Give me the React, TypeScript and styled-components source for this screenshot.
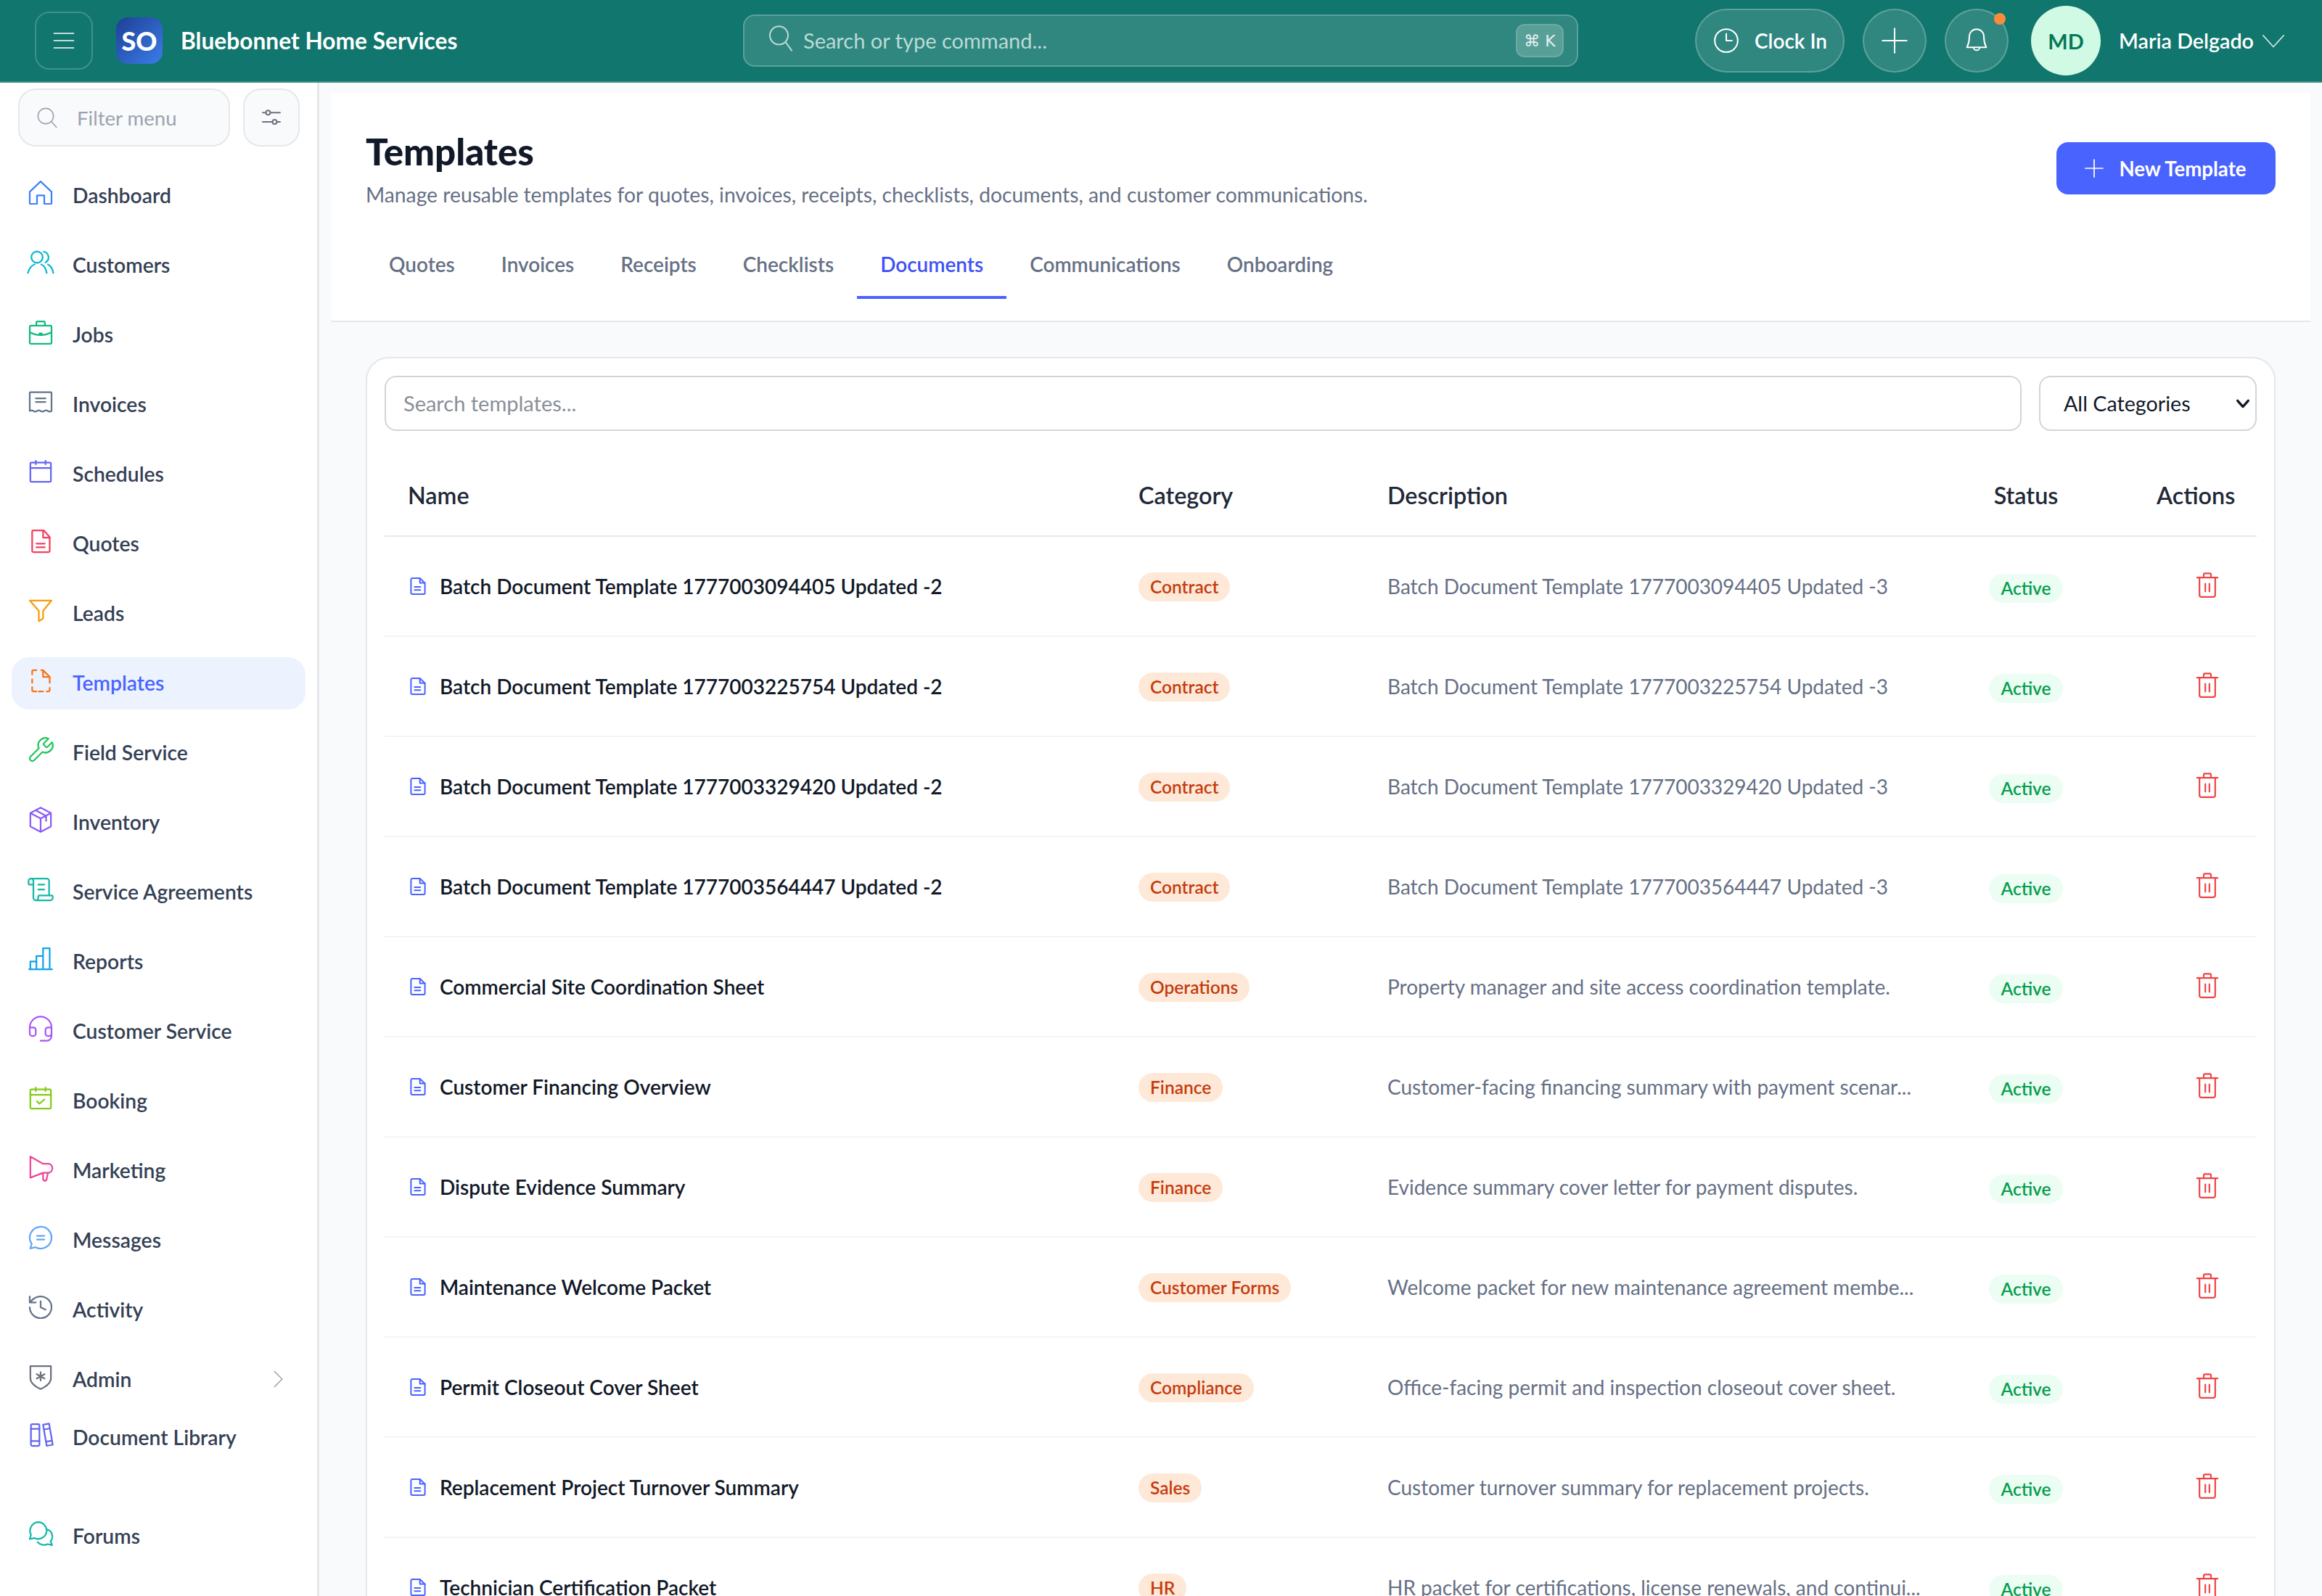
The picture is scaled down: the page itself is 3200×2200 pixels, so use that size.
import React from 'react'
import styled, { createGlobalStyle } from 'styled-components'

const GlobalStyle = createGlobalStyle`
  html, body {
    margin: 0;
    padding: 0;
    background: #f9fafb;
  }
  * {
    box-sizing: border-box;
  }
  body {
    font-family: 'Lato', 'Noto Sans', sans-serif;
  }
`

const Shell = styled.div`
  width: 3200px;
  height: 2200px;
  overflow: hidden;
  display: flex;
  flex-direction: column;
`

const TopBar = styled.header`
  height: 114px;
  flex: none;
  display: flex;
  align-items: center;
  background: #11766d;
  border-bottom: 2px solid #3f8f87;
  padding: 0 50px 0 48px;
`

const MenuButton = styled.button`
  width: 80px;
  height: 80px;
  flex: none;
  display: flex;
  align-items: center;
  justify-content: center;
  background: transparent;
  border: 2px solid rgba(255, 255, 255, 0.2);
  border-radius: 20px;
  color: rgba(255, 255, 255, 0.75);
  padding: 0;
`

const Logo = styled.div`
  width: 64px;
  height: 64px;
  flex: none;
  margin-left: 32px;
  display: flex;
  align-items: center;
  justify-content: center;
  border-radius: 16px;
  background: linear-gradient(135deg, #1e3f96, #3b7de8);
  color: #fff;
  font-size: 36px;
  font-weight: 900;
`

const Brand = styled.div`
  margin-left: 25px;
  width: 382px;
  flex: none;
  color: #fff;
  font-size: 31.7px;
  font-weight: 700;
  white-space: nowrap;
`

const CommandBar = styled.div`
  margin-left: 393px;
  width: 1151px;
  height: 72px;
  flex: none;
  display: flex;
  align-items: center;
  padding: 0 18px 6px 30px;
  background: rgba(255, 255, 255, 0.13);
  border: 2px solid rgba(255, 255, 255, 0.22);
  border-radius: 16px;
  color: #bcdad6;
  font-size: 29px;
`

const CommandLabel = styled.span`
  margin-left: 11px;
  flex: 1;
  position: relative;
  top: 2px;
`

const Kbd = styled.span`
  width: 66px;
  height: 46px;
  display: flex;
  align-items: center;
  justify-content: center;
  gap: 6px;
  position: relative;
  top: 3px;
  border-radius: 12px;
  border: 2px solid rgba(255, 255, 255, 0.12);
  background: rgba(255, 255, 255, 0.2);
  color: #e6f2f0;
  font-size: 22px;
  font-family: 'DejaVu Sans', sans-serif;
`

const TopActions = styled.div`
  margin-left: auto;
  display: flex;
  align-items: center;
`

const ClockButton = styled.button`
  width: 206px;
  height: 88px;
  display: flex;
  align-items: center;
  justify-content: center;
  gap: 20px;
  background: rgba(255, 255, 255, 0.13);
  border: 2px solid rgba(255, 255, 255, 0.22);
  border-radius: 44px;
  color: #fff;
  font-family: inherit;
  font-size: 28px;
  font-weight: 600;
  padding: 0;
`

const RoundButton = styled.button`
  position: relative;
  width: 88px;
  height: 88px;
  margin-left: 25px;
  display: flex;
  align-items: center;
  justify-content: center;
  background: rgba(255, 255, 255, 0.13);
  border: 2px solid rgba(255, 255, 255, 0.22);
  border-radius: 50%;
  color: #fff;
  padding: 0;
`

const NotifyDot = styled.span`
  position: absolute;
  top: 4px;
  right: 2px;
  width: 16px;
  height: 16px;
  border-radius: 50%;
  background: #fb8a3c;
`

const Avatar = styled.div`
  width: 96px;
  height: 96px;
  margin-left: 31px;
  display: flex;
  align-items: center;
  justify-content: center;
  border-radius: 50%;
  background: #d1fae5;
  color: #047857;
  font-size: 29px;
  font-weight: 700;
`

const UserName = styled.span`
  margin-left: 25px;
  color: #fff;
  font-size: 28.7px;
  font-weight: 600;
  white-space: nowrap;
`

const UserChevron = styled.span`
  margin-left: 10px;
  display: flex;
  color: rgba(255, 255, 255, 0.8);
`

const Body = styled.div`
  flex: 1;
  display: flex;
  min-height: 0;
`

const Sidebar = styled.aside`
  width: 440px;
  flex: none;
  background: #fff;
  border-right: 3px solid #e5e7eb;
  padding: 8px 16px 0;
  overflow: hidden;
`

const FilterRow = styled.div`
  display: flex;
  gap: 18px;
  margin: 0 8px 32px 9px;
`

const FilterBox = styled.div`
  width: 292px;
  height: 80px;
  display: flex;
  align-items: center;
  gap: 25px;
  padding-left: 22px;
  background: #f9fafb;
  border: 2px solid #e5e7eb;
  border-radius: 24px;
  color: #9ca3af;
  font-size: 27.6px;
`

const FilterButton = styled.button`
  width: 78px;
  height: 80px;
  display: flex;
  align-items: center;
  justify-content: center;
  background: #f9fafb;
  border: 2px solid #e5e7eb;
  border-radius: 24px;
  color: #6b7280;
  padding: 0;
`

const NavGroup = styled.nav<{ $top?: number }>`
  display: flex;
  flex-direction: column;
  gap: 24px;
  margin-top: ${(p) => p.$top || 0}px;
`

const NavItem = styled.a<{ $active?: boolean }>`
  height: 72px;
  flex: none;
  display: flex;
  align-items: center;
  padding: 0 20px 2px;
  border-radius: 24px;
  background: ${(p) => (p.$active ? '#ecf2fe' : 'transparent')};
  color: ${(p) => (p.$active ? '#4963ff' : '#344054')};
  font-size: 28.3px;
  font-weight: 600;
`

const NavIconSlot = styled.span`
  width: 40px;
  height: 40px;
  flex: none;
  display: flex;
  margin: 0 24px 6px 0;
`

const NavArrow = styled.span`
  margin-left: auto;
  margin-right: 4px;
  display: flex;
  color: #9ca3af;
`

const Main = styled.main`
  flex: 1;
  min-width: 0;
  padding: 14px 16px 0;
  background: #f9fafb;
`

const PageHead = styled.section`
  height: 316px;
  background: #fff;
  border-bottom: 2px solid #e5e7eb;
  padding: 0 48px;
  display: flex;
  flex-direction: column;
`

const TitleRow = styled.div`
  display: flex;
  justify-content: space-between;
  align-items: flex-start;
  padding-top: 52px;
`

const Title = styled.h1`
  margin: 0;
  color: #111827;
  font-size: 51px;
  line-height: 58px;
  font-weight: 900;
`

const Subtitle = styled.p`
  margin: 10px 0 0;
  color: #667085;
  font-size: 28.25px;
  line-height: 40px;
`

const NewButton = styled.button`
  width: 302px;
  height: 72px;
  margin-top: 16px;
  display: flex;
  align-items: center;
  justify-content: center;
  gap: 18px;
  background: #4963ff;
  border: none;
  border-radius: 16px;
  color: #fff;
  font-family: inherit;
  font-size: 27.6px;
  font-weight: 700;
  padding: 0 4px 0 0;
`

const Tabs = styled.div`
  display: flex;
  margin-top: 48px;
`

const Tab = styled.a<{ $active?: boolean }>`
  height: 76px;
  display: flex;
  align-items: center;
  padding: 0 32px 16px;
  border-bottom: 4px solid ${(p) => (p.$active ? '#4963ff' : 'transparent')};
  color: ${(p) => (p.$active ? '#3d50f5' : '#667085')};
  font-size: 27.95px;
  font-weight: 600;
`

const Content = styled.div`
  padding: 48px;
`

const Card = styled.section`
  background: #fff;
  border: 2px solid #e5e7eb;
  border-radius: 32px;
  padding: 24px;
`

const Toolbar = styled.div`
  display: flex;
  gap: 24px;
  margin-bottom: 32px;
`

const SearchBox = styled.div`
  flex: 1;
  height: 76px;
  display: flex;
  align-items: center;
  padding: 0 24px 2px;
  border: 2px solid #d1d5db;
  border-radius: 16px;
  color: #8a8f98;
  font-size: 29px;
`

const SelectWrap = styled.div`
  position: relative;
  width: 300px;
  height: 76px;
`

const CategorySelect = styled.select`
  width: 100%;
  height: 100%;
  appearance: none;
  padding: 0 32px;
  background: #fff;
  border: 2px solid #d1d5db;
  border-radius: 16px;
  color: #111827;
  font-family: inherit;
  font-size: 28.7px;
`

const SelectChevron = styled.span`
  position: absolute;
  top: 27px;
  right: 8px;
  display: flex;
  color: #111827;
  pointer-events: none;
`

const Table = styled.table`
  width: 100%;
  table-layout: fixed;
  border-collapse: collapse;
`

const HeadCell = styled.th<{ $w?: number; $center?: boolean }>`
  width: ${(p) => (p.$w ? `${p.$w}px` : 'auto')};
  height: 113px;
  padding: 0 32px;
  text-align: ${(p) => (p.$center ? 'center' : 'left')};
  border-bottom: 2px solid #e5e7eb;
  color: #1f2937;
  font-size: 32.3px;
  font-weight: 600;
`

const Row = styled.tr`
  height: 138px;
  border-bottom: 2px solid #f3f4f6;
`

const Cell = styled.td<{ $center?: boolean }>`
  padding: 0 32px;
  text-align: ${(p) => (p.$center ? 'center' : 'left')};
  white-space: nowrap;
`

const NameWrap = styled.div`
  display: flex;
  align-items: center;
  gap: 14px;
  margin-left: -2px;
  color: #111827;
  font-size: 28px;
  font-weight: 600;
`

const Description = styled.span`
  color: #667085;
  font-size: 28px;
`

const CategoryPill = styled.span`
  display: inline-block;
  height: 40px;
  margin-top: 2px;
  padding: 0 16px;
  border-radius: 20px;
  background: #fee9d8;
  color: #c53b0c;
  font-size: 24.5px;
  font-weight: 600;
  line-height: 40px;
`

const StatusPill = styled.span`
  display: inline-block;
  height: 40px;
  margin-top: 6px;
  padding: 0 16px;
  border-radius: 20px;
  background: #ecfdf3;
  color: #059e4e;
  font-size: 24.5px;
  font-weight: 600;
  line-height: 40px;
`

const TrashButton = styled.button`
  display: inline-flex;
  margin-left: 34px;
  background: none;
  border: none;
  padding: 0;
  color: #ef4444;
`

type IconProps = { size?: number; color?: string; width?: number; children: React.ReactNode }

function Ico({ size = 40, color = 'currentColor', width = 1.35, children }: IconProps) {
  return (
    <svg
      width={size}
      height={size}
      viewBox="0 0 24 24"
      fill="none"
      stroke={color}
      strokeWidth={width}
      strokeLinecap="round"
      strokeLinejoin="round"
    >
      {children}
    </svg>
  )
}

const navGroups: { label: string; arrow?: boolean; active?: boolean; icon: React.ReactNode }[][] = [
  [
    {
      label: 'Dashboard',
      icon: (
        <Ico color="#3b82f6">
          <path d="M12 2.5 3 11v9.5a.5.5 0 0 0 .5.5H9v-7h6v7h5.5a.5.5 0 0 0 .5-.5V11z" />
        </Ico>
      ),
    },
    {
      label: 'Customers',
      icon: (
        <Ico color="#06b6d4">
          <circle cx="9" cy="7.5" r="4.7" />
          <path d="M1.5 20.5c1-4 3.5-6.5 5.5-7M12.5 13.5c2 .7 3.8 3 4.5 7M14.5 3a4.7 4.7 0 0 1 1.5 8.8M18 13.5c2 .8 3.7 3.2 4.5 7" />
        </Ico>
      ),
    },
    {
      label: 'Jobs',
      icon: (
        <Ico color="#10b981">
          <rect x="3" y="6.5" width="18" height="15" rx="1" />
          <path d="M8.5 6.5V4a1 1 0 0 1 1-1h5a1 1 0 0 1 1 1v2.5M3 12c5.5 3 12.5 3 18 0M11 13h2" />
        </Ico>
      ),
    },
    {
      label: 'Invoices',
      icon: (
        <Ico color="#64748b">
          <path d="M3 19.5v-15a.5.5 0 0 1 .5-.5h17a.5.5 0 0 1 .5.5v15q-1.5 1-3 0t-3 0-3 0-3 0-3 0-3 0zM8 9h8M8 12h8" />
        </Ico>
      ),
    },
    {
      label: 'Schedules',
      icon: (
        <Ico color="#6366f1">
          <rect x="3.5" y="4.5" width="17" height="16" rx="1" />
          <path d="M3.5 9h17M8 3v3M16 3v3" />
        </Ico>
      ),
    },
    {
      label: 'Quotes',
      icon: (
        <Ico color="#f43f5e">
          <path d="M6 3h8.5l5 5.5V20a1 1 0 0 1-1 1H6a1 1 0 0 1-1-1V4a1 1 0 0 1 1-1z" />
          <path d="M14 3.5V9h5.5M8.5 14h7M8.5 17h7" />
        </Ico>
      ),
    },
    {
      label: 'Leads',
      icon: (
        <Ico color="#f59e0b">
          <path d="M3 3.5h18L14 12v6.5l-3.5 2V12z" />
        </Ico>
      ),
    },
    {
      label: 'Templates',
      active: true,
      icon: (
        <Ico color="#f97316">
          <path d="M8.5 3.5H6a1 1 0 0 0-1 1V7M5 11v3M5 17.5V20a1 1 0 0 0 1 1h2.5M10.5 21H14M17 21h1.5a1 1 0 0 0 1-1v-2M19.5 14V9L14 3.5h-1.5M14 3.5V9h5.5" />
        </Ico>
      ),
    },
    {
      label: 'Field Service',
      icon: (
        <Ico color="#22c55e">
          <path d="M14.7 6.3a1 1 0 0 0 0 1.4l1.6 1.6a1 1 0 0 0 1.4 0l3.77-3.77a6 6 0 0 1-7.94 7.94l-6.91 6.91a2.12 2.12 0 0 1-3-3l6.91-6.91a6 6 0 0 1 7.94-7.94l-3.76 3.76z" />
        </Ico>
      ),
    },
    {
      label: 'Inventory',
      icon: (
        <Ico color="#8b5cf6">
          <path d="m12 2 8.5 4.5v11L12 22l-8.5-4.5v-11zM3.5 6.5 12 11l8.5-4.5M12 11v11M8 4.2l8.5 4.6V13" />
        </Ico>
      ),
    },
    {
      label: 'Service Agreements',
      icon: (
        <Ico color="#14b8a6">
          <path d="M15 12h-5M15 8h-5M19 17V5a2 2 0 0 0-2-2H4M8 21h12a2 2 0 0 0 2-2v-1a1 1 0 0 0-1-1H11a1 1 0 0 0-1 1v1a2 2 0 1 1-4 0V5a2 2 0 1 0-4 0v2a1 1 0 0 0 1 1h3" />
        </Ico>
      ),
    },
    {
      label: 'Reports',
      icon: (
        <Ico color="#0ea5e9">
          <path d="M2.5 20.5h19M3.5 20.5V14h5v6.5M8.5 20.5v-11H14v11M14 9.5V3h5.5v17.5" />
        </Ico>
      ),
    },
    {
      label: 'Customer Service',
      icon: (
        <Ico color="#a855f7">
          <path d="M3 11h3a2 2 0 0 1 2 2v3a2 2 0 0 1-2 2H5a2 2 0 0 1-2-2v-5Zm0 0a9 9 0 1 1 18 0m0 0v5a2 2 0 0 1-2 2h-1a2 2 0 0 1-2-2v-3a2 2 0 0 1 2-2h3ZM21 16v2a4 4 0 0 1-4 4h-5" />
        </Ico>
      ),
    },
    {
      label: 'Booking',
      icon: (
        <Ico color="#84cc16">
          <rect x="3.5" y="4.5" width="17" height="16" rx="1" />
          <path d="M3.5 9h17M8 3v3M16 3v3M9 14.5l2 2 4-3.5" />
        </Ico>
      ),
    },
    {
      label: 'Marketing',
      icon: (
        <Ico color="#ec4899">
          <path d="M3.5 2.5V20L14 16h4.5a3.8 3.8 0 0 0 0-7.500H14zM14 16v5a1.5 1.5 0 0 0 3 0l1-5" />
        </Ico>
      ),
    },
    {
      label: 'Messages',
      icon: (
        <Ico color="#60a5fa">
          <path d="M12 3a9 9 0 1 1-4.3 16.9L3.5 21l1.1-3.9A9 9 0 0 1 12 3zM9 10.5h6M9 13.500h6" />
        </Ico>
      ),
    },
    {
      label: 'Activity',
      icon: (
        <Ico color="#64748b">
          <path d="M3 12a9 9 0 1 0 9-9 9.75 9.75 0 0 0-6.74 2.74L3 8M3 3v5h5M12 7v5l4 2" />
        </Ico>
      ),
    },
    {
      label: 'Admin',
      arrow: true,
      icon: (
        <Ico color="#6b7280">
          <path d="M3.5 3h17v10c0 4-4 7-8.5 9-4.5-2-8.5-5-8.5-9zM12 8v7M8.8 9.7l6.4 3.6M15.2 9.7l-6.4 3.6" />
        </Ico>
      ),
    },
  ],
  [
    {
      label: 'Document Library',
      icon: (
        <Ico color="#6366f1">
          <rect x="4" y="3" width="7" height="18" rx="1" />
          <path d="M4 7h7M4 17h7M14 3.5l5-.9 3 17.5-5 .9zM14.7 7.5l5-.9M17 17.5l4.5-.8" />
        </Ico>
      ),
    },
  ],
  [
    {
      label: 'Forums',
      icon: (
        <Ico color="#14b8a6">
          <path d="M10 2.5a7.2 7.2 0 0 1 7 7 7 7 0 0 1-10 6.2l-4 .8 1-3.5A7.3 7.3 0 0 1 10 2.5z" />
          <path d="M17 8.5a6 6 0 0 1 3.2 9.8l1.3 3.2-3.7-.8a7 7 0 0 1-8.3-1.7" />
        </Ico>
      ),
    },
  ],
]

const tabs = ['Quotes', 'Invoices', 'Receipts', 'Checklists', 'Documents', 'Communications', 'Onboarding']

const rows = [
  ['Batch Document Template 1777003094405 Updated -2', 'Contract', 'Batch Document Template 1777003094405 Updated -3'],
  ['Batch Document Template 1777003225754 Updated -2', 'Contract', 'Batch Document Template 1777003225754 Updated -3'],
  ['Batch Document Template 1777003329420 Updated -2', 'Contract', 'Batch Document Template 1777003329420 Updated -3'],
  ['Batch Document Template 1777003564447 Updated -2', 'Contract', 'Batch Document Template 1777003564447 Updated -3'],
  ['Commercial Site Coordination Sheet', 'Operations', 'Property manager and site access coordination template.'],
  ['Customer Financing Overview', 'Finance', 'Customer-facing financing summary with payment scenar...'],
  ['Dispute Evidence Summary', 'Finance', 'Evidence summary cover letter for payment disputes.'],
  ['Maintenance Welcome Packet', 'Customer Forms', 'Welcome packet for new maintenance agreement membe...'],
  ['Permit Closeout Cover Sheet', 'Compliance', 'Office-facing permit and inspection closeout cover sheet.'],
  ['Replacement Project Turnover Summary', 'Sales', 'Customer turnover summary for replacement projects.'],
  ['Technician Certification Packet', 'HR', 'HR packet for certifications, license renewals, and continui...'],
]

function App() {
  return (
    <Shell>
      <GlobalStyle />
      <TopBar>
        <MenuButton>
          <Ico size={40} width={1.3}>
            <path d="M4 6h16M4 12h16M4 18h16" />
          </Ico>
        </MenuButton>
        <Logo>SO</Logo>
        <Brand>Bluebonnet Home Services</Brand>
        <CommandBar>
          <Ico size={40} width={1.2}>
            <circle cx="10.5" cy="9.5" r="7.5" />
            <path d="m16 15 5 7" />
          </Ico>
          <CommandLabel>Search or type command...</CommandLabel>
          <Kbd>⌘ K</Kbd>
        </CommandBar>
        <TopActions>
          <ClockButton>
            <Ico size={38} width={1.3}>
              <circle cx="12" cy="12" r="10" />
              <path d="M12 6v6h5" />
            </Ico>
            Clock In
          </ClockButton>
          <RoundButton>
            <Ico size={40} width={1.2}>
              <path d="M12 2v20M2 12h20" />
            </Ico>
          </RoundButton>
          <RoundButton>
            <Ico size={40} width={1.2}>
              <path d="M12 2.5a6 6 0 0 1 6 6c0 6 1.5 7.500 2 9H4c.5-1.5 2-3 2-9a6 6 0 0 1 6-6zM9.5 17.5a2.5 2.5 0 0 0 5 0" />
            </Ico>
            <NotifyDot />
          </RoundButton>
          <Avatar>MD</Avatar>
          <UserName>Maria Delgado</UserName>
          <UserChevron>
            <Ico size={34} width={1.2}>
              <path d="m2 7 10 11L22 7" />
            </Ico>
          </UserChevron>
        </TopActions>
      </TopBar>
      <Body>
        <Sidebar>
          <FilterRow>
            <FilterBox>
              <Ico size={32} width={1.2}>
                <circle cx="10.5" cy="10.5" r="8" />
                <path d="m16.5 16.5 5 5.5" />
              </Ico>
              Filter menu
            </FilterBox>
            <FilterButton>
              <Ico size={36} width={1.3}>
                <circle cx="9" cy="7.5" r="2" />
                <circle cx="15" cy="16" r="2" />
                <path d="M4 7.5h3M11 7.5h9M4 16h9M17 16h3" />
              </Ico>
            </FilterButton>
          </FilterRow>
          {navGroups.map((group, i) => (
            <NavGroup key={i} $top={i === 1 ? 8 : i === 2 ? 64 : 0}>
              {group.map((item) => (
                <NavItem key={item.label} $active={item.active}>
                  <NavIconSlot>{item.icon}</NavIconSlot>
                  {item.label}
                  {item.arrow && (
                    <NavArrow>
                      <Ico size={28} width={1.4}>
                        <path d="m8 3 9 9-9 9" />
                      </Ico>
                    </NavArrow>
                  )}
                </NavItem>
              ))}
            </NavGroup>
          ))}
        </Sidebar>
        <Main>
          <PageHead>
            <TitleRow>
              <div>
                <Title>Templates</Title>
                <Subtitle>
                  Manage reusable templates for quotes, invoices, receipts, checklists, documents, and customer
                  communications.
                </Subtitle>
              </div>
              <NewButton>
                <Ico size={32} width={1.3}>
                  <path d="M12 3v18M3 12h18" />
                </Ico>
                New Template
              </NewButton>
            </TitleRow>
            <Tabs>
              {tabs.map((t) => (
                <Tab key={t} $active={t === 'Documents'}>
                  {t}
                </Tab>
              ))}
            </Tabs>
          </PageHead>
          <Content>
            <Card>
              <Toolbar>
                <SearchBox>Search templates...</SearchBox>
                <SelectWrap>
                  <CategorySelect defaultValue="all">
                    <option value="all">All Categories</option>
                  </CategorySelect>
                  <SelectChevron>
                    <Ico size={22} width={3.6}>
                      <path d="m4 8 8 9 8-9" />
                    </Ico>
                  </SelectChevron>
                </SelectWrap>
              </Toolbar>
              <Table>
                <thead>
                  <tr>
                    <HeadCell $w={1007}>Name</HeadCell>
                    <HeadCell $w={343}>Category</HeadCell>
                    <HeadCell $w={764}>Description</HeadCell>
                    <HeadCell $w={296} $center>
                      Status
                    </HeadCell>
                    <HeadCell $center>Actions</HeadCell>
                  </tr>
                </thead>
                <tbody>
                  {rows.map(([name, category, description]) => (
                    <Row key={name}>
                      <Cell>
                        <NameWrap>
                          <Ico size={32} color="#4963ff" width={1.5}>
                            <path d="M6 3.7h8l5.2 5V19a1.3 1.3 0 0 1-1.3 1.3H6.100A1.3 1.3 0 0 1 4.800 19V5A1.3 1.3 0 0 1 6 3.700z" />
                            <path d="M14 3.7v5h5.2M8.500 12.700h6M8.500 16h6" />
                          </Ico>
                          {name}
                        </NameWrap>
                      </Cell>
                      <Cell>
                        <CategoryPill>{category}</CategoryPill>
                      </Cell>
                      <Cell>
                        <Description>{description}</Description>
                      </Cell>
                      <Cell $center>
                        <StatusPill>Active</StatusPill>
                      </Cell>
                      <Cell $center>
                        <TrashButton>
                          <Ico size={40} width={1.3}>
                            <path d="M3.5 5.5h17M5.5 5.5V20A1.5 1.5 0 0 0 7 21.5h10a1.5 1.5 0 0 0 1.5-1.5V5.5M9 5.5V3a1 1 0 0 1 1-1h4a1 1 0 0 1 1 1v2.5M10.3 10.5V17M13.700 10.500V17" />
                          </Ico>
                        </TrashButton>
                      </Cell>
                    </Row>
                  ))}
                </tbody>
              </Table>
            </Card>
          </Content>
        </Main>
      </Body>
    </Shell>
  )
}

export default App
